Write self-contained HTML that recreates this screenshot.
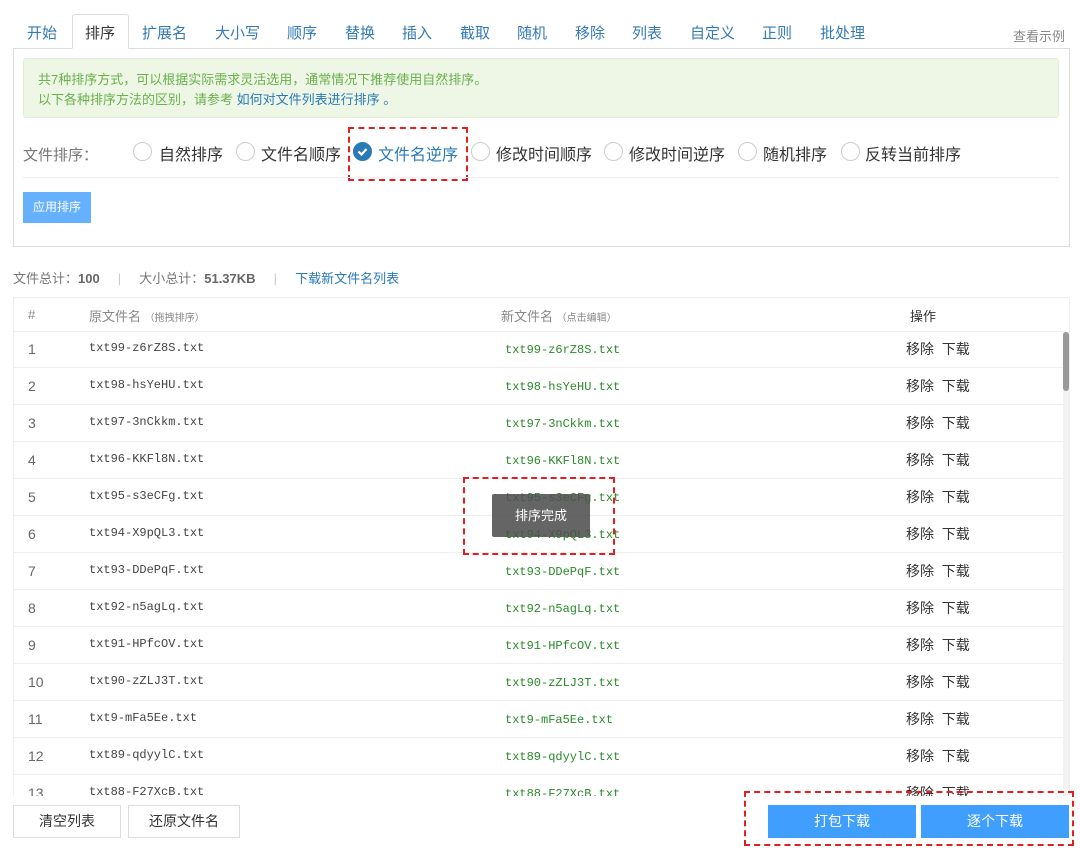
<!DOCTYPE html>
<html><head><meta charset="utf-8"><style>
*{box-sizing:border-box;margin:0;padding:0}
body{width:1080px;height:851px;overflow:hidden;background:#fff;font-family:"Liberation Sans","Noto Sans CJK SC",sans-serif;color:#333;position:relative}
.abs{position:absolute}
.tab{position:absolute;top:22px;font-size:15px;color:#337ab7}
.mono{font-family:"Liberation Mono","Noto Sans CJK SC",monospace;font-size:12px}
.row{position:absolute;left:14px;width:1049px;height:37px;border-bottom:1px solid #eee}
.row span{position:absolute;top:10px}
.n{left:14px;font-size:14px;color:#666}
.o{left:75px;color:#444}
.g{left:491px;color:#2a8a2a;top:12px!important}
.op{left:892px;font-size:14px;color:#333;top:8px!important}
.radio{position:absolute;top:142px;width:19px;height:19px;border:1px solid #ccc;border-radius:50%}
.rl{position:absolute;top:141px;font-size:16px;color:#333}
.dash{position:absolute;border:2px dashed #e02020}
</style></head><body>
<div class="abs" style="left:13px;top:48px;width:1057px;height:1px;background:#ddd"></div>
<div class="abs" style="left:72px;top:14px;width:57px;height:35px;border:1px solid #ddd;border-bottom:1px solid #fff;background:#fff;border-radius:3px 3px 0 0"></div>
<span class="tab" style="left:27px">开始</span>
<span class="tab" style="left:85px;color:#333">排序</span>
<span class="tab" style="left:142px">扩展名</span>
<span class="tab" style="left:215px">大小写</span>
<span class="tab" style="left:287px">顺序</span>
<span class="tab" style="left:345px">替换</span>
<span class="tab" style="left:402px">插入</span>
<span class="tab" style="left:460px">截取</span>
<span class="tab" style="left:517px">随机</span>
<span class="tab" style="left:575px">移除</span>
<span class="tab" style="left:632px">列表</span>
<span class="tab" style="left:690px">自定义</span>
<span class="tab" style="left:762px">正则</span>
<span class="tab" style="left:820px">批处理</span>
<span class="abs" style="left:1013px;top:26px;font-size:13px;color:#888">查看示例</span>
<div class="abs" style="left:13px;top:48px;width:1057px;height:199px;border:1px solid #ddd;border-top:none"></div>
<div class="abs" style="left:23px;top:58px;width:1036px;height:60px;background:#eef7e6;border:1px solid #e1f0d4;border-radius:3px;padding:11px 14px;font-size:13px;line-height:20px;color:#6ab04c">共7种排序方式，可以根据实际需求灵活选用，通常情况下推荐使用自然排序。<br>以下各种排序方法的区别，请参考 <span style="color:#2a7ab8">如何对文件列表进行排序 。</span></div>
<span class="abs" style="left:23px;top:144px;font-size:15px;color:#777">文件排序：</span>
<div class="radio" style="left:133px"></div><span class="rl" style="left:159px">自然排序</span>
<div class="radio" style="left:236px"></div><span class="rl" style="left:261px">文件名顺序</span>
<div class="radio" style="left:353px;background:#2a7ab8;border-color:#2a7ab8"><svg width="17" height="17" viewBox="0 0 17 17"><path d="M4.5 8.5l3 3 5-5.5" stroke="#fff" stroke-width="2.2" fill="none"/></svg></div><span class="rl" style="left:378px;color:#2a7ab8">文件名逆序</span>
<div class="radio" style="left:471px"></div><span class="rl" style="left:496px">修改时间顺序</span>
<div class="radio" style="left:604px"></div><span class="rl" style="left:629px">修改时间逆序</span>
<div class="radio" style="left:738px"></div><span class="rl" style="left:763px">随机排序</span>
<div class="radio" style="left:841px"></div><span class="rl" style="left:865px">反转当前排序</span>
<div class="dash" style="left:348px;top:127px;width:120px;height:54px"></div>
<div class="abs" style="left:23px;top:177px;width:1036px;height:1px;background:#eee"></div>
<div class="abs" style="left:23px;top:192px;width:68px;height:31px;background:#66b1ff;color:#fff;font-size:12px;line-height:31px;text-align:center">应用排序</div>
<div class="abs" style="left:13px;top:268px;font-size:13px;color:#777">文件总计：<b style="color:#666">100</b>&nbsp;&nbsp;&nbsp;&nbsp;&nbsp;<span style="color:#ccc">|</span>&nbsp;&nbsp;&nbsp;&nbsp;&nbsp;大小总计：<b style="color:#666">51.37KB</b>&nbsp;&nbsp;&nbsp;&nbsp;&nbsp;<span style="color:#ccc">|</span>&nbsp;&nbsp;&nbsp;&nbsp;&nbsp;<span style="color:#2a7ab8">下载新文件名列表</span></div>
<div class="abs" style="left:13px;top:297px;width:1057px;height:500px;border:1px solid #eee;overflow:hidden">
<div class="abs" style="left:0;top:0;width:1049px;height:34px;border-bottom:1px solid #eee;font-size:13px;color:#888">
<span class="abs" style="left:14px;top:9px">#</span>
<span class="abs" style="left:75px;top:8px">原文件名 <small style="font-size:10px">（拖拽排序）</small></span>
<span class="abs" style="left:487px;top:8px">新文件名 <small style="font-size:10px">（点击编辑）</small></span>
<span class="abs" style="left:896px;top:8px;color:#333">操作</span></div>
<div class="abs" style="left:1049px;top:34px;width:6px;height:470px;background:#f2f2f2"></div>
<div class="abs" style="left:1049px;top:34px;width:6px;height:59px;background:#999;border-radius:3px"></div>
</div>
<div id="rows"></div>
<div class="abs" style="left:492px;top:494px;width:98px;height:43px;background:rgba(80,80,80,.88);color:#fff;font-size:13px;text-align:center;line-height:43px;border-radius:2px">排序完成</div>
<div class="dash" style="left:463px;top:477px;width:152px;height:78px"></div>
<div class="abs" style="left:0;top:796px;width:1080px;height:55px;background:#fff"></div>
<div class="abs" style="left:13px;top:805px;width:108px;height:33px;border:1px solid #ddd;font-size:14px;text-align:center;line-height:31px">清空列表</div>
<div class="abs" style="left:128px;top:805px;width:112px;height:33px;border:1px solid #ddd;font-size:14px;text-align:center;line-height:31px">还原文件名</div>
<div class="abs" style="left:768px;top:805px;width:148px;height:33px;background:#409eff;color:#fff;font-size:14px;text-align:center;line-height:33px">打包下载</div>
<div class="abs" style="left:921px;top:805px;width:148px;height:33px;background:#409eff;color:#fff;font-size:14px;text-align:center;line-height:33px">逐个下载</div>
<div class="dash" style="left:744px;top:791px;width:330px;height:55px"></div>
<script>
var d=["txt99-z6rZ8S","txt98-hsYeHU","txt97-3nCkkm","txt96-KKFl8N","txt95-s3eCFg","txt94-X9pQL3","txt93-DDePqF","txt92-n5agLq","txt91-HPfcOV","txt90-zZLJ3T","txt9-mFa5Ee","txt89-qdyylC","txt88-F27XcB"],h="";
d.forEach(function(n,i){var t=331+i*37;if(i==12){h+='<div class="row" style="top:'+t+'px;height:34px;overflow:hidden">';}else h+='<div class="row" style="top:'+t+'px">';
h+='<span class="n">'+(i+1)+'</span><span class="o mono">'+n+'.txt</span><span class="g mono">'+n+'.txt</span><span class="op">移除&nbsp;&nbsp;下载</span></div>';});
document.getElementById("rows").innerHTML=h;
</script>
</body></html>
